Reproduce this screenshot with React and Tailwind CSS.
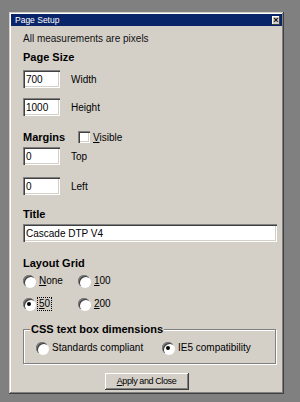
import React from 'react';

const font = { fontFamily: '"Liberation Sans", Arial, sans-serif' };

const sunken =
    'bg-white shadow-[inset_1px_1px_0_#808080,inset_2px_2px_0_#404040,inset_-1px_-1px_0_#ffffff,inset_-2px_-2px_0_#d4d0c8]';

const TextBox = ({ value, className = '' }) => (
    <div className={`h-[18px] flex items-center pl-[3px] text-[10px] text-black ${sunken} ${className}`}>
        {value}
    </div>
);

const Radio = ({ checked }) => (
    <div className="relative h-[12px] w-[12px] shrink-0 rounded-full bg-white shadow-[inset_1px_1px_0_#808080,inset_2px_2px_0_#404040,1px_1px_0_#ffffff]">
        {checked && (
            <div className="absolute left-[4px] top-[4px] h-[4px] w-[4px] rounded-full bg-black" />
        )}
    </div>
);

const RadioOption = ({ checked, label, focus, width = 'w-[55px]' }) => (
    <div className={`flex shrink-0 items-center gap-[2px] ${width}`}>
        <Radio checked={checked} />
        <span className={`text-[10px] leading-[12px] text-black ${focus ? 'border border-dotted border-black px-[1px]' : 'px-[2px]'}`}>
            {label}
        </span>
    </div>
);

const Heading = ({ children, className = '' }) => (
    <div className={`h-[16px] flex items-center text-[11px] font-bold text-black ${className}`}>{children}</div>
);

const FieldRow = ({ value, label, className = '' }) => (
    <div className={`flex items-center gap-[11px] ${className}`}>
        <TextBox value={value} className="w-[37px]" />
        <span className="text-[10px] text-black">{label}</span>
    </div>
);

export default function App() {
    return (
        <div className="h-[402px] w-[300px] bg-[#808080] pl-[9px] pt-[12px]" style={font}>
            <div className="flex h-[382px] w-[275px] flex-col bg-[#d4d0c8] p-[2px] shadow-[inset_-1px_-1px_0_#404040,inset_1px_1px_0_#d4d0c8,inset_-2px_-2px_0_#808080,inset_2px_2px_0_#ffffff]">
                {/* title bar */}
                <div className="flex h-[12px] items-center justify-between bg-[#0a246a] pl-[4px] pr-[2px]">
                    <span className="text-[8.5px] leading-none text-white">Page Setup</span>
                    <div className="flex h-[9px] w-[8px] items-center justify-center bg-[#d4d0c8] text-[9px] font-bold leading-none text-black shadow-[inset_-1px_-1px_0_#404040,inset_1px_1px_0_#ffffff]">
                        ×
                    </div>
                </div>

                <div className="flex flex-col px-[12px]">
                    <div className="mt-[4px] h-[16px] flex items-center text-[10px] text-[#111]">All measurements are pixels</div>

                    <Heading className="mt-[3px]">Page Size</Heading>
                    <FieldRow value="700" label="Width" className="mt-[5px]" />
                    <FieldRow value="1000" label="Height" className="mt-[10px]" />

                    <div className="mt-[13px] flex h-[16px] items-center">
                        <span className="w-[55px] text-[11px] font-bold text-black">Margins</span>
                        <div className={`h-[12px] w-[12px] ${sunken}`} />
                        <span className="ml-[3px] text-[10px] text-black">
                            <span className="underline">V</span>isible
                        </span>
                    </div>
                    <FieldRow value="0" label="Top" className="mt-[2px]" />
                    <FieldRow value="0" label="Left" className="mt-[12px]" />

                    <Heading className="mt-[11px]">Title</Heading>
                    <TextBox value="Cascade DTP V4" className="mt-[2px] w-[254px]" />

                    <Heading className="mt-[13px]">Layout Grid</Heading>
                    <div className="mt-[2px] flex h-[16px] items-center">
                        <RadioOption label={<><span className="underline">N</span>one</>} />
                        <RadioOption label={<><span className="underline">1</span>00</>} />
                    </div>
                    <div className="mt-[7px] flex h-[16px] items-center">
                        <RadioOption checked focus label={<><span className="underline">5</span>0</>} />
                        <RadioOption label={<><span className="underline">2</span>00</>} />
                    </div>

                    <fieldset className="mt-[9px] w-[253px] min-w-0 border border-[#808080] pl-[12px] pr-[4px] pb-[7px] shadow-[1px_1px_0_#ffffff,inset_1px_1px_0_#ffffff]">
                        <legend className="ml-[-6px] h-[16px] bg-[#d4d0c8] px-[1px] text-[11px] font-bold leading-[16px] text-black">
                            CSS text box dimensions
                        </legend>
                        <div className="mt-[3px] flex h-[16px] items-center">
                            <RadioOption width="w-[126px]" label="Standards compliant" />
                            <RadioOption checked width="w-auto" label="IE5 compatibility" />
                        </div>
                    </fieldset>

                    <div className="mt-[9px] flex justify-center">
                        <button className="h-[17px] w-[84px] bg-[#d4d0c8] text-[9px] tracking-[-0.4px] text-black shadow-[inset_-1px_-1px_0_#404040,inset_1px_1px_0_#ffffff,inset_-2px_-2px_0_#808080]">
                            <span className="underline">A</span>pply and Close
                        </button>
                    </div>
                </div>
            </div>
        </div>
    );
}
